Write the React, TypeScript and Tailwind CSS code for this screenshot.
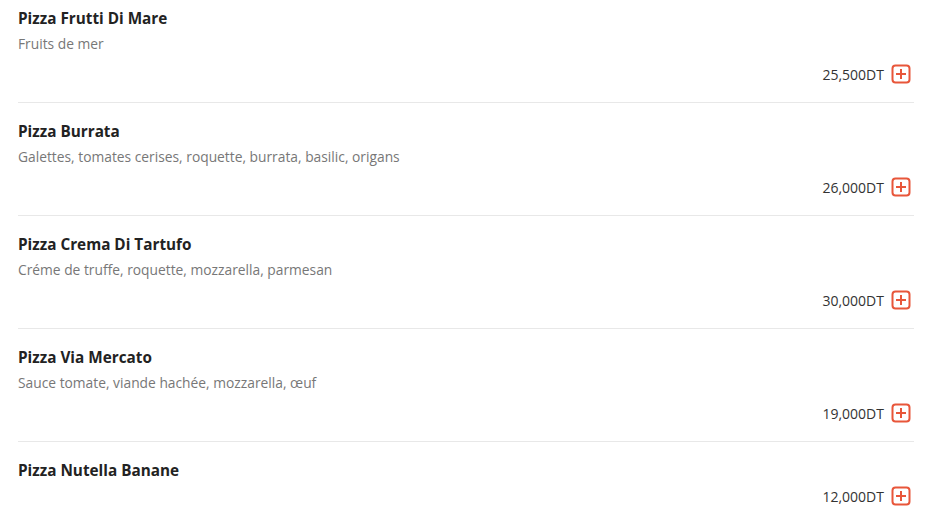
const items = [
  { name: 'Pizza Frutti Di Mare', desc: 'Fruits de mer', price: '25,500DT' },
  { name: 'Pizza Burrata', desc: 'Galettes, tomates cerises, roquette, burrata, basilic, origans', price: '26,000DT' },
  { name: 'Pizza Crema Di Tartufo', desc: 'Créme de truffe, roquette, mozzarella, parmesan', price: '30,000DT' },
  { name: 'Pizza Via Mercato', desc: 'Sauce tomate, viande hachée, mozzarella, œuf', price: '19,000DT' },
  { name: 'Pizza Nutella Banane', desc: '', price: '12,000DT' },
]

function PlusIcon() {
  return (
    <svg width="20" height="20" viewBox="0 0 20 20" fill="none">
      <rect x="1.5" y="1.5" width="17" height="17" rx="3" stroke="#e8563a" strokeWidth="2" />
      <path d="M10 5v10M5 10h10" stroke="#e8563a" strokeWidth="2" />
    </svg>
  )
}

export default function App() {
  return (
    <div className="w-[928px] h-[525px] overflow-hidden bg-white pl-[18px] pr-[14px] font-['Open_Sans','Noto_Sans',sans-serif]">
      {items.map((item, i) => (
        <div
          key={item.name}
          className={`flex flex-col pb-[18px] ${i === 0 ? 'pt-[8px]' : 'pt-[18px]'} ${i < items.length - 1 ? 'border-b border-[#e8e8e8]' : ''}`}
        >
          <h3 className="text-[15.3px] leading-5 font-bold text-[#222]">{item.name}</h3>
          {item.desc && (
            <p className="mt-[6px] mb-[4px] text-[13.8px] leading-5 text-[#777]">{item.desc}</p>
          )}
          <div className="mt-[6px] flex h-5 items-center justify-end gap-[7px] pr-[3px]">
            <span className="text-[14px] text-[#333]">{item.price}</span>
            <PlusIcon />
          </div>
        </div>
      ))}
    </div>
  )
}
